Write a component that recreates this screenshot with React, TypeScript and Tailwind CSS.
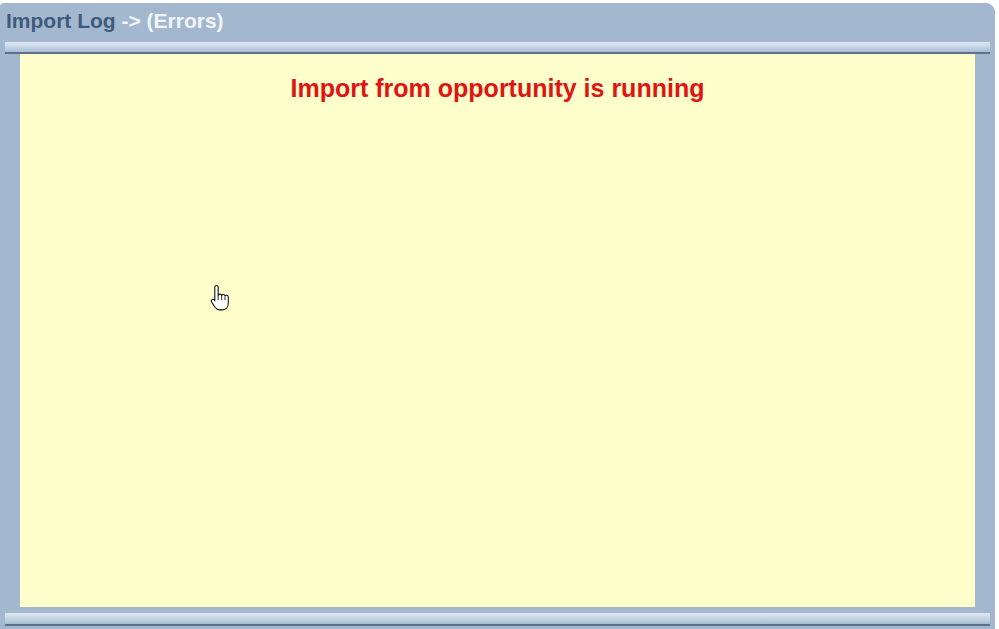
import React from "react";

function HandCursor() {
  return (
    <svg width="20" height="28" viewBox="0 0 20 28" className="absolute left-[210px] top-[284px]">
      <path
        d="M6.5 1.5c1 0 1.7.7 1.7 1.7v8.2c.3-.9 1-1.3 1.8-1.3.9 0 1.6.6 1.7 1.4.3-.6.9-1 1.6-1 .9 0 1.6.6 1.7 1.5.3-.5.9-.8 1.5-.8 1 0 1.8.8 1.8 1.8v6.3c0 3.9-2.6 6.6-6.3 6.6H10c-2.3 0-3.7-.9-5-2.7L1.6 18c-.6-.9-.4-1.9.4-2.4.8-.5 1.7-.3 2.3.4l.5.7V3.2c0-1 .7-1.7 1.7-1.7z"
        fill="#ffffff"
        stroke="#111111"
        strokeWidth="1.1"
        strokeLinejoin="round"
      />
      <path d="M8.2 11.4v4.8M11.7 11.8v4.4M15 12.6v3.6" stroke="#111111" strokeWidth="0.9" fill="none" />
    </svg>
  );
}

export default function App() {
  return (
    <div className="w-[999px] h-[629px] bg-white relative overflow-hidden" style={{ fontFamily: '"Liberation Sans", Arial, sans-serif' }}>
      <div className="mt-[3px] w-[995px] h-[626px] bg-[#a3b8cf] rounded-tr-[9px] rounded-tl-[4px] flex flex-col">
        <div className="h-[39px] pl-[6px] pt-[4px] text-[21px] font-bold leading-[27px]">
          <span className="text-[#3e5b7c]">Import Log</span>
          <span className="text-[#f2f5f9]"> -&gt; (Errors)</span>
        </div>
        <div className="ml-[5px] w-[985px] h-[12px] bg-gradient-to-b from-[#dfe8f1] via-[#c6d5e4] to-[#a9bdd2] border-b-[2px] border-[#5b7189]" />
        <div className="flex-1 flex pl-[20px] pr-[20px]">
          <div className="flex-1 bg-[#ffffcc] h-[553px] flex justify-center pt-[19px]">
            <div className="text-[25px] font-bold text-[#e11414] leading-[31px]">
              Import from opportunity is running
            </div>
          </div>
        </div>
        <div className="ml-[5px] w-[985px] h-[13px] bg-gradient-to-b from-[#dfe8f1] via-[#c6d5e4] to-[#a9bdd2] border-b-[2px] border-[#5b7189] mb-[3px]" />
      </div>
      <HandCursor />
    </div>
  );
}
